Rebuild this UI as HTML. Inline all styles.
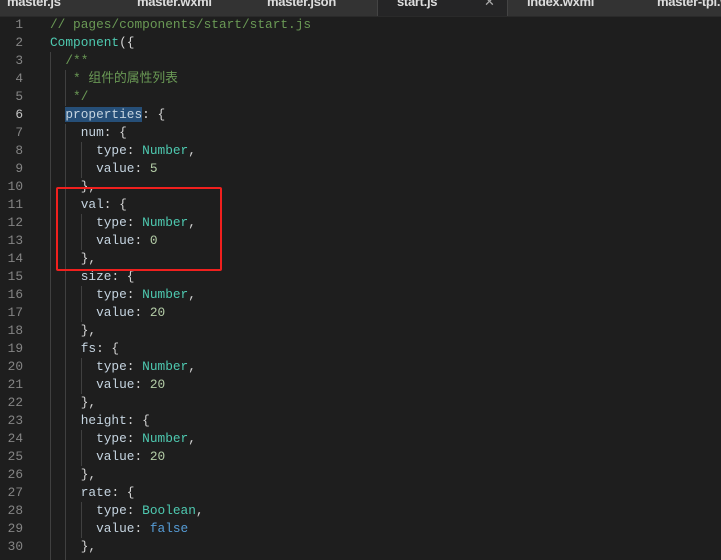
<!DOCTYPE html>
<html><head><meta charset="utf-8"><style>
body{margin:0;width:721px;height:560px;overflow:hidden;background:#1e1e1e;position:relative;font-family:"Liberation Mono","Noto Sans CJK SC",monospace;}
.tabs{position:absolute;left:0;top:0;width:721px;height:16px;background:#333;overflow:hidden;border-bottom:1px solid #2a2a2a}
.tab{position:absolute;top:-6px;font:bold 13px "Liberation Sans",sans-serif;color:#ddd;letter-spacing:-0.3px;white-space:nowrap}
.act{position:absolute;left:377px;top:0;width:129px;height:16px;background:#252526;border-left:1px solid #444;border-right:1px solid #444}
.ln{position:absolute;left:0;width:23px;text-align:right;font-size:12.8px;color:#858585;height:18px;line-height:18px}
.cd{position:absolute;left:50px;font-size:12.8px;color:#d4d4d4;height:18px;line-height:18px;white-space:pre}
.g{position:absolute;width:1px;background:#404040}
.c{color:#6a9955}.t{color:#4ec9b0}.k{color:#c5d4e0}.n{color:#b5cea8}.b{color:#569cd6}
.sel{background:#264f78}
.box{position:absolute;left:56px;top:187px;width:162px;height:80px;border:2px solid #f0201e;border-radius:2px}
</style></head><body>
<div class="tabs">
<div class="act"></div>
<span class="tab" style="left:7px">master.js</span>
<span class="tab" style="left:137px">master.wxml</span>
<span class="tab" style="left:267px">master.json</span>
<span class="tab" style="left:397px">start.js</span>
<span class="tab" style="left:484px;font-weight:normal;color:#aaa">✕</span>
<span class="tab" style="left:527px">index.wxml</span>
<span class="tab" style="left:657px">master-tpl.wxml</span>
</div>
<div class="g" style="left:50px;top:52px;height:508px"></div>
<div class="g" style="left:65px;top:70px;height:36px"></div>
<div class="g" style="left:65px;top:124px;height:436px"></div>
<div class="g" style="left:81px;top:142px;height:36px"></div>
<div class="g" style="left:81px;top:214px;height:36px"></div>
<div class="g" style="left:81px;top:286px;height:36px"></div>
<div class="g" style="left:81px;top:358px;height:36px"></div>
<div class="g" style="left:81px;top:430px;height:36px"></div>
<div class="g" style="left:81px;top:502px;height:36px"></div>

<div class="ln" style="top:16px">1</div><div class="cd" style="top:16px"><span class="c">// pages/components/start/start.js</span></div>
<div class="ln" style="top:34px">2</div><div class="cd" style="top:34px"><span class="t">Component</span>({</div>
<div class="ln" style="top:52px">3</div><div class="cd" style="top:52px"><span class="c">  /**</span></div>
<div class="ln" style="top:70px">4</div><div class="cd" style="top:70px"><span class="c">   * 组件的属性列表</span></div>
<div class="ln" style="top:88px">5</div><div class="cd" style="top:88px"><span class="c">   */</span></div>
<div class="ln" style="top:106px;color:#c6c6c6">6</div><div class="cd" style="top:106px">  <span class="k sel">properties</span>: {</div>
<div class="ln" style="top:124px">7</div><div class="cd" style="top:124px">    <span class="k">num</span>: {</div>
<div class="ln" style="top:142px">8</div><div class="cd" style="top:142px">      <span class="k">type</span>: <span class="t">Number</span>,</div>
<div class="ln" style="top:160px">9</div><div class="cd" style="top:160px">      <span class="k">value</span>: <span class="n">5</span></div>
<div class="ln" style="top:178px">10</div><div class="cd" style="top:178px">    },</div>
<div class="ln" style="top:196px">11</div><div class="cd" style="top:196px">    <span class="k">val</span>: {</div>
<div class="ln" style="top:214px">12</div><div class="cd" style="top:214px">      <span class="k">type</span>: <span class="t">Number</span>,</div>
<div class="ln" style="top:232px">13</div><div class="cd" style="top:232px">      <span class="k">value</span>: <span class="n">0</span></div>
<div class="ln" style="top:250px">14</div><div class="cd" style="top:250px">    },</div>
<div class="ln" style="top:268px">15</div><div class="cd" style="top:268px">    <span class="k">size</span>: {</div>
<div class="ln" style="top:286px">16</div><div class="cd" style="top:286px">      <span class="k">type</span>: <span class="t">Number</span>,</div>
<div class="ln" style="top:304px">17</div><div class="cd" style="top:304px">      <span class="k">value</span>: <span class="n">20</span></div>
<div class="ln" style="top:322px">18</div><div class="cd" style="top:322px">    },</div>
<div class="ln" style="top:340px">19</div><div class="cd" style="top:340px">    <span class="k">fs</span>: {</div>
<div class="ln" style="top:358px">20</div><div class="cd" style="top:358px">      <span class="k">type</span>: <span class="t">Number</span>,</div>
<div class="ln" style="top:376px">21</div><div class="cd" style="top:376px">      <span class="k">value</span>: <span class="n">20</span></div>
<div class="ln" style="top:394px">22</div><div class="cd" style="top:394px">    },</div>
<div class="ln" style="top:412px">23</div><div class="cd" style="top:412px">    <span class="k">height</span>: {</div>
<div class="ln" style="top:430px">24</div><div class="cd" style="top:430px">      <span class="k">type</span>: <span class="t">Number</span>,</div>
<div class="ln" style="top:448px">25</div><div class="cd" style="top:448px">      <span class="k">value</span>: <span class="n">20</span></div>
<div class="ln" style="top:466px">26</div><div class="cd" style="top:466px">    },</div>
<div class="ln" style="top:484px">27</div><div class="cd" style="top:484px">    <span class="k">rate</span>: {</div>
<div class="ln" style="top:502px">28</div><div class="cd" style="top:502px">      <span class="k">type</span>: <span class="t">Boolean</span>,</div>
<div class="ln" style="top:520px">29</div><div class="cd" style="top:520px">      <span class="k">value</span>: <span class="b">false</span></div>
<div class="ln" style="top:538px">30</div><div class="cd" style="top:538px">    },</div>
<div class="box"></div>
</body></html>
